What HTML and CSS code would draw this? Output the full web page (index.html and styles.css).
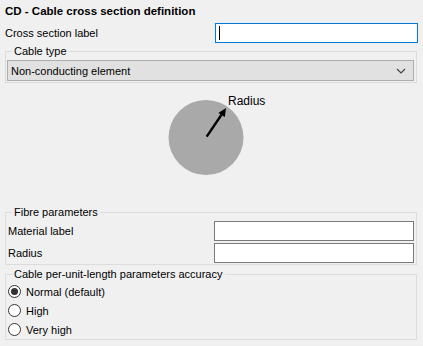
FILE: index.html
```html
<!DOCTYPE html>
<html lang="en">
<head>
    <meta charset="UTF-8">
    <title>CD - Cable cross section definition</title>
    <link rel="stylesheet" href="styles.css">
</head>
<body>
    <div class="form">
        <div class="title">CD - Cable cross section definition</div>

        <div class="row top-row">
            <label for="sectionLabel">Cross section label</label>
            <div class="textbox wide focused"><span class="caret"></span></div>
        </div>

        <fieldset class="group cable-type">
            <legend>Cable type</legend>
            <div class="select">
                <span>Non-conducting element</span>
                <svg class="chevron" width="10" height="6" viewBox="0 0 10 6">
                    <path d="M1 1 L5 5 L9 1" fill="none" stroke="#444" stroke-width="1.2"/>
                </svg>
            </div>
        </fieldset>

        <div class="sketch">
            <svg width="412" height="122" viewBox="0 0 412 122">
                <circle cx="201" cy="54.5" r="37.5" fill="#a9a9a9"/>
                <line x1="201.7" y1="53.7" x2="217" y2="31" stroke="#000" stroke-width="2.4"/>
                <polygon points="221,25 219.8,34 213.4,29.9" fill="#000"/>
                <text x="223" y="22" class="sketch-label">Radius</text>
            </svg>
        </div>

        <fieldset class="group fibre">
            <legend>Fibre parameters</legend>
            <div class="row">
                <label>Material label</label>
                <div class="textbox"></div>
            </div>
            <div class="row">
                <label>Radius</label>
                <div class="textbox"></div>
            </div>
        </fieldset>

        <fieldset class="group accuracy">
            <legend>Cable per-unit-length parameters accuracy</legend>
            <div class="radio checked"><span class="dot"></span>Normal (default)</div>
            <div class="radio"><span class="dot"></span>High</div>
            <div class="radio"><span class="dot"></span>Very high</div>
        </fieldset>
    </div>
</body>
</html>
```

FILE: styles.css
```css
body {
    margin: 0;
    background-color: #f0f0f0;
    font-family: "Liberation Sans", Arial, sans-serif;
    font-size: 11px;
    color: #000;
}
.form {
    padding: 3px 5px 0 5px;
    width: 413px;
}
.title {
    font-weight: bold;
    font-size: 11.5px;
    line-height: 16px;
    height: 16px;
}
.row {
    display: flex;
    align-items: center;
    justify-content: space-between;
    height: 20px;
}
.top-row {
    margin-top: 4px;
}
.textbox {
    box-sizing: border-box;
    width: 200px;
    height: 20px;
    background: white;
    border: 1px solid #7a7a7a;
}
.textbox.wide {
    width: 203px;
}
.textbox.focused {
    border-color: #0078d7;
    padding: 2px 0 0 3px;
}
.caret {
    display: block;
    width: 1px;
    height: 14px;
    background: #000;
}
.group {
    margin: 0;
    min-width: 0;
    border: 1px solid #dcdcdc;
    padding: 0 2px 1px 1px;
    width: 412px;
    box-sizing: border-box;
}
.group legend {
    line-height: 14px;
    padding: 0 2px;
    margin-left: 5px;
}
.cable-type {
    margin-top: 1px;
}
.select {
    box-sizing: border-box;
    margin-top: 2px;
    height: 21px;
    background: #e1e1e1;
    border: 1px solid #adadad;
    display: flex;
    align-items: center;
    justify-content: space-between;
    padding: 0 7px 0 3px;
}
.chevron {
    display: block;
}
.sketch {
    height: 122px;
}
.sketch svg {
    display: block;
}
.sketch-label {
    font-family: "Liberation Sans", Arial, sans-serif;
    font-size: 12px;
}
.fibre {
    padding-top: 2px;
}
.fibre .row + .row {
    margin-top: 2px;
}
.fibre label {
    padding-left: 1px;
}
.accuracy {
    margin-top: 2px;
    padding-top: 1px;
    padding-bottom: 0;
}
.radio {
    display: flex;
    align-items: center;
    height: 19px;
    padding-left: 1px;
}
.dot {
    box-sizing: border-box;
    width: 13px;
    height: 13px;
    border: 1px solid #333;
    border-radius: 50%;
    background: white;
    margin-right: 5px;
    position: relative;
}
.radio.checked .dot::after {
    content: "";
    position: absolute;
    left: 2px;
    top: 2px;
    width: 7px;
    height: 7px;
    border-radius: 50%;
    background: #333;
}
```
